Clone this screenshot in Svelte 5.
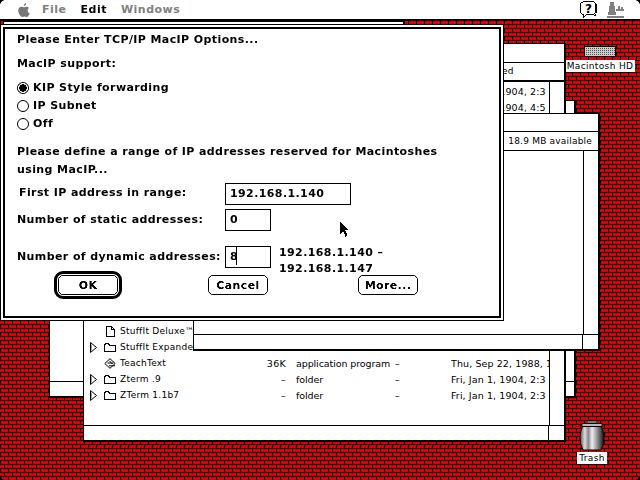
<script lang="ts">
    const upperRows = [
        { name: "", size: "", kind: "", dash: "", date: "Fri, Jan 1, 1904, 2:3", icon: "" },
        { name: "", size: "", kind: "", dash: "", date: "Fri, Jan 1, 1904, 4:5", icon: "" },
    ];
    const lowerRows = [
        { name: "StuffIt Deluxe™", size: "", kind: "", dash: "", date: "", icon: "doc" },
        { name: "StuffIt Expander", size: "", kind: "", dash: "", date: "", icon: "folder" },
        { name: "TeachText", size: "36K", kind: "application program", dash: "–", date: "Thu, Sep 22, 1988, 1", icon: "app" },
        { name: "Zterm .9", size: "–", kind: "folder", dash: "–", date: "Fri, Jan 1, 1904, 2:3", icon: "folder" },
        { name: "ZTerm 1.1b7", size: "–", kind: "folder", dash: "–", date: "Fri, Jan 1, 1904, 2:3", icon: "folder" },
    ];
</script>

{#snippet finderRow(row)}
    <div class="row">
        <span class="twist">
            {#if row.icon === "folder"}
                <svg width="7" height="11" viewBox="0 0 7 11"><path d="M.5.5v10l6-5z" fill="#fff" stroke="#000" /><path d="M1.500 2.500v6" stroke="#999" /></svg>
            {/if}
        </span>
        <span class="ico">
            {#if row.icon === "folder"}
                <svg width="12" height="9" viewBox="0 0 12 9" shape-rendering="crispEdges"><path d="M.5 8.500v-7h1v-1h3v1h1v1h6v6z" fill="#fff" stroke="#000" /></svg>
            {:else if row.icon === "doc"}
                <svg class="doc" width="9" height="11" viewBox="0 0 9 11" shape-rendering="crispEdges"><path d="M.5.5h5l3 3v7h-8z" fill="#fff" stroke="#000" /><path d="M5.500.5v3h3" fill="none" stroke="#000" /></svg>
            {:else if row.icon === "app"}
                <svg width="12" height="11" viewBox="0 0 12 11"><path d="M6 .7L.8 5.500 6 10.300l5.200-4.800z" fill="#fff" stroke="#000" /><path d="M3.500 5h6M5.500 3l3 3M5 7.800h6" stroke="#000" /></svg>
            {/if}
        </span>
        <span class="name">{row.name}</span>
        <span class="size">{row.size}</span>
        <span class="kind">{row.kind}</span>
        <span class="dash">{row.dash}</span>
        <span class="date">{row.date}</span>
    </div>
{/snippet}

<div class="screen">
    <!-- Desktop pattern -->
    <svg class="bricks" width="640" height="480" shape-rendering="crispEdges">
        <defs>
            <pattern id="brick" width="8" height="8" patternUnits="userSpaceOnUse" x="5" y="1">
                <rect width="8" height="8" fill="#000" />
                <rect x="0" y="0" width="7" height="3" fill="#dd0000" />
                <rect x="4" y="4" width="4" height="3" fill="#dd0000" />
                <rect x="0" y="4" width="3" height="3" fill="#dd0000" />
            </pattern>
        </defs>
        <rect width="640" height="480" fill="url(#brick)" />
    </svg>

    <!-- Menu bar -->
    <header class="menubar">
        <div class="menus">
            <svg class="apple" width="12" height="14" viewBox="0 0 12 14"><path d="M8.200 0c.1 1.500-1 2.800-2.400 2.900C5.700 1.500 6.800.2 8.200 0zM1 5c1-1.500 2.800-1.600 4-1 .7.300 1.300.3 2 0 1.300-.6 3-.4 4 1-2 1.300-1.800 4.200.8 5.400-.6 1.300-1.300 2.400-2.300 3.300-1 .6-1.800-.2-3-.2s-2 .8-3 .2C1.300 12.400-1 8 1 5z" fill="#777" /></svg>
            <span class="menu dim">File</span>
            <span class="menu">Edit</span>
            <span class="menu dim">Windows</span>
        </div>
        <div class="status">
            <svg width="17" height="18" viewBox="0 0 17 18" shape-rendering="crispEdges"><path d="M3.500.5h10l2 2v9l-2 2h-7l-3 3v-3h-1l-2-2v-9z" fill="#fff" stroke="#000" /><path d="M16 3v9M14 14h1v-1" stroke="#000" fill="none" /><text x="8.500" y="11.500" text-anchor="middle" class="help">?</text></svg>
            <svg width="18" height="17" viewBox="0 0 18 17" shape-rendering="crispEdges"><path d="M3 1h4v4H3zM2 5h6v6H2zM1 11h8v3H1zM0 15h17v2H0zM9 8h8v2H9zM11 5h2v3h-2zM14 6h2v2h-2z" fill="#808080" /></svg>
        </div>
    </header>

    <!-- Desktop icons -->
    <div class="desk-icon hd">
        <svg width="32" height="11" viewBox="0 0 32 11" shape-rendering="crispEdges">
            <defs><pattern id="dots" width="2" height="2" patternUnits="userSpaceOnUse"><rect width="2" height="2" fill="#ccc" /><rect width="1" height="1" fill="#555" /></pattern></defs>
            <rect x=".5" y=".5" width="31" height="10" fill="url(#dots)" stroke="#000" />
        </svg>
        <span class="label">Macintosh HD</span>
    </div>
    <div class="desk-icon trash">
        <svg width="26" height="31" viewBox="0 0 26 31">
            <defs><linearGradient id="can" x1="0" x2="1" y1="0" y2="0">
                <stop offset="0" stop-color="#555" /><stop offset=".2" stop-color="#ddd" /><stop offset=".35" stop-color="#888" /><stop offset=".5" stop-color="#eee" /><stop offset=".7" stop-color="#999" /><stop offset=".85" stop-color="#555" /><stop offset="1" stop-color="#111" />
            </linearGradient></defs>
            <path d="M4 4h18q3 7 3 13t-3 12H4Q1 23 1 17T4 4z" fill="url(#can)" stroke="#000" />
            <path d="M3 2.500h20v3H3z" fill="#bbb" stroke="#000" />
            <path d="M9 0h8v2H9z" fill="#777" />
        </svg>
        <span class="label">Trash</span>
    </div>

    <!-- Finder windows, back to front -->
    <div class="window strip"></div>
    <div class="window back">
        <div class="foot"></div>
    </div>
    <div class="window list">
        <div class="head"></div>
        <div class="subhead">Last Modified</div>
        <div class="list-body">
            {#each upperRows as row}
                {@render finderRow(row)}
            {/each}
            <div class="hidden-rows"></div>
            {#each lowerRows as row}
                {@render finderRow(row)}
            {/each}
        </div>
        <div class="foot"><div class="scroll-corner"></div></div>
        <div class="scroll-line"></div>
    </div>
    <div class="window front">
        <div class="head"></div>
        <div class="info">18.9 MB available</div>
        <div class="front-body"></div>
        <div class="foot"><div class="scroll-corner"></div></div>
        <div class="scroll-line"></div>
    </div>

    <!-- Dialog -->
    <div class="dialog" role="dialog">
        <div class="dialog-inner">
            <p class="line">Please Enter TCP/IP MacIP Options...</p>
            <p class="line support">MacIP support:</p>
            <div class="radios">
                <label class="radio"><span class="dot on"></span>KIP Style forwarding</label>
                <label class="radio"><span class="dot"></span>IP Subnet</label>
                <label class="radio"><span class="dot"></span>Off</label>
            </div>
            <p class="line define">Please define a range of IP addresses reserved for Macintoshes<br />using MacIP...</p>
            <div class="field first">
                <span class="field-label indent">First IP address in range:</span>
                <span class="input wide">192.168.1.140</span>
            </div>
            <div class="field static">
                <span class="field-label lower">Number of static addresses:</span>
                <span class="input">0</span>
            </div>
            <div class="field dynamic">
                <span class="field-label lower">Number of dynamic addresses:</span>
                <span class="input">8<i class="caret"></i></span>
                <span class="range">192.168.1.140 –<br />192.168.1.147</span>
            </div>
            <div class="actions">
                <span class="default-ring"><button class="btn">OK</button></span>
                <button class="btn cancel">Cancel</button>
                <button class="btn">More...</button>
            </div>
        </div>
    </div>

    <!-- Pointer -->
    <svg class="pointer" width="10" height="16" viewBox="0 0 10 16" shape-rendering="crispEdges"><path d="M0 0l8 8.500H5l2.500 6-2 1L3 10l-3 3z" fill="#000" /></svg>

    <!-- Rounded screen corners -->
    <i class="corner tl"></i><i class="corner tr"></i><i class="corner bl"></i><i class="corner br"></i>
</div>

<style>
    :global(body) {
        margin: 0;
        background: #000;
    }

    .screen {
        position: relative;
        width: 640px;
        height: 480px;
        overflow: hidden;
        font-family: "DejaVu Sans", sans-serif;
        color: #000;
    }

    .bricks {
        position: absolute;
        inset: 0;
    }

    /* ── Menu bar ── */
    .menubar {
        position: absolute;
        top: 0;
        left: 0;
        right: 0;
        height: 19px;
        background: #fff;
        border-bottom: 2px solid #000;
        display: flex;
        justify-content: space-between;
        z-index: 5;
    }
    .menus {
        display: flex;
        align-items: center;
        padding-left: 18px;
        gap: 14px;
    }
    .apple {
        margin-right: -2px;
    }
    .menu {
        font: bold 11px "DejaVu Sans", sans-serif;
        letter-spacing: 0.5px;
        filter: contrast(2.5);
    }
    .dim {
        color: #808080;
        filter: none;
    }
    .status {
        display: flex;
        align-items: flex-start;
        gap: 10px;
        padding: 1px 15px 0 0;
    }
    .help {
        font: bold 12px "DejaVu Sans", sans-serif;
    }

    /* ── Desktop icons ── */
    .desk-icon {
        position: absolute;
        display: flex;
        flex-direction: column;
        align-items: center;
    }
    .hd {
        left: 568px;
        top: 46px;
        width: 64px;
        gap: 3px;
    }
    .trash {
        left: 577px;
        top: 421px;
        width: 30px;
    }
    .label {
        background: #fff;
        font: 9px "DejaVu Sans", sans-serif;
        letter-spacing: 0.35px;
        line-height: 12px;
        padding: 0 2px;
        white-space: nowrap;
    }

    /* ── Finder windows ── */
    .window {
        position: absolute;
        box-sizing: border-box;
        background: #fff;
        border: 1px solid #000;
        border-right-width: 2px;
        border-bottom-width: 2px;
    }
    .strip {
        left: 3px;
        top: 21px;
        width: 402px;
        height: 30px;
    }
    .back {
        left: 49px;
        top: 100px;
        width: 527px;
        height: 298px;
        display: flex;
        flex-direction: column;
        justify-content: flex-end;
    }
    .foot {
        height: 14px;
        border-top: 1px solid #000;
        display: flex;
        justify-content: flex-end;
    }
    .scroll-corner {
        width: 15px;
        border-left: 1px solid #000;
    }
    .head {
        height: 18px;
        border-bottom: 1px solid #000;
    }
    .scroll-line {
        position: absolute;
        right: 14px;
        top: 37px;
        bottom: 15px;
        width: 1px;
        background: #000;
    }

    .list {
        left: 83px;
        top: 43px;
        width: 483px;
        height: 399px;
        display: flex;
        flex-direction: column;
    }
    .subhead {
        height: 17px;
        border-bottom: 2px solid #000;
        padding-left: 367px;
        font-size: 9px;
        letter-spacing: 0.2px;
        line-height: 17px;
        white-space: nowrap;
        overflow: hidden;
    }
    .list-body {
        flex: 1;
        overflow: hidden;
        padding-top: 1px;
    }
    .hidden-rows {
        height: 208px;
    }
    .row {
        height: 16px;
        display: flex;
        align-items: center;
        width: 465px;
        font-size: 9.5px;
        letter-spacing: 0.3px;
        white-space: nowrap;
    }
    .twist {
        width: 7px;
        margin-left: 6px;
        display: flex;
    }
    .ico {
        width: 16px;
        margin-left: 7px;
        display: flex;
    }
    .doc {
        margin-left: 2px;
    }
    .name {
        width: 140px;
        font-size: 9px;
        letter-spacing: 0.25px;
    }
    .size {
        width: 26px;
        text-align: right;
    }
    .kind {
        width: 99px;
        margin-left: 10px;
        letter-spacing: -0.1px;
    }
    .dash {
        width: 56px;
    }
    .date {
        flex: 1;
        overflow: hidden;
        letter-spacing: 0.1px;
    }

    .front {
        left: 193px;
        top: 113px;
        width: 407px;
        height: 238px;
        display: flex;
        flex-direction: column;
    }
    .front .head {
        height: 17px;
    }
    .info {
        height: 18px;
        border-bottom: 1px solid #000;
        font-size: 9px;
        letter-spacing: 0.2px;
        line-height: 18px;
        text-align: right;
        padding-right: 6px;
    }
    .front-body {
        flex: 1;
    }

    /* ── Dialog ── */
    .dialog {
        position: absolute;
        left: 0;
        top: 24px;
        width: 504px;
        height: 297px;
        box-sizing: border-box;
        background: #fff;
        border: 1px solid #000;
        padding: 2px;
        z-index: 3;
    }
    .dialog-inner {
        box-sizing: border-box;
        height: 100%;
        border: 2px solid #000;
        padding: 2px 0 0 12px;
        font: bold 11px "DejaVu Sans", sans-serif;
        letter-spacing: 0.4px;
        line-height: 18px;
        filter: contrast(2);
    }
    .line {
        margin: 0;
    }
    .support {
        margin-top: 6px;
    }
    .radios {
        margin-top: 6px;
        display: flex;
        flex-direction: column;
    }
    .radio {
        display: flex;
        align-items: center;
        gap: 4px;
        height: 18px;
    }
    .dot {
        width: 12px;
        height: 12px;
        box-sizing: border-box;
        border: 1px solid #000;
        border-radius: 50%;
        display: block;
    }
    .dot.on {
        background: radial-gradient(circle, #000 0 3.5px, #fff 4px);
    }
    .define {
        margin-top: 10px;
    }
    .field {
        display: flex;
        align-items: flex-start;
        height: 22px;
        white-space: nowrap;
    }
    .field-label {
        width: 208px;
    }
    .lower {
        padding-top: 2px;
    }
    .indent {
        padding: 1px 0 0 2px;
        width: 206px;
    }
    .first {
        margin-top: 4px;
    }
    .static {
        margin-top: 4px;
    }
    .dynamic {
        margin-top: 15px;
    }
    .input {
        box-sizing: border-box;
        width: 46px;
        height: 22px;
        border: 1px solid #000;
        padding-left: 4px;
        line-height: 20px;
        position: relative;
    }
    .wide {
        width: 126px;
    }
    .caret {
        position: absolute;
        left: 10px;
        top: 0;
        width: 1px;
        height: 18px;
        background: #000;
    }
    .range {
        margin: -1px 0 0 8px;
        line-height: 16px;
    }
    .actions {
        display: flex;
        align-items: center;
        margin-top: 4px;
        margin-left: 37px;
        height: 26px;
    }
    .default-ring {
        display: flex;
        border: 3px solid #000;
        border-radius: 9px;
        padding: 1px;
        margin-right: 86px;
    }
    .btn {
        font: inherit;
        color: #000;
        letter-spacing: inherit;
        background: #fff;
        border: 1px solid #000;
        border-radius: 5px;
        padding: 0;
        height: 20px;
        line-height: 20px;
        width: 60px;
    }
    .cancel {
        margin-right: 90px;
    }

    .pointer {
        position: absolute;
        left: 340px;
        top: 221px;
        z-index: 4;
    }

    /* ── Screen corners ── */
    .corner {
        position: absolute;
        width: 5px;
        height: 5px;
        z-index: 6;
        background: radial-gradient(circle at var(--cx) var(--cy), transparent 4.5px, #000 5px);
    }
    .tl { left: 0; top: 0; --cx: 100%; --cy: 100%; }
    .tr { right: 0; top: 0; --cx: 0; --cy: 100%; }
    .bl { left: 0; bottom: 0; --cx: 100%; --cy: 0; }
    .br { right: 0; bottom: 0; --cx: 0; --cy: 0; }
</style>
